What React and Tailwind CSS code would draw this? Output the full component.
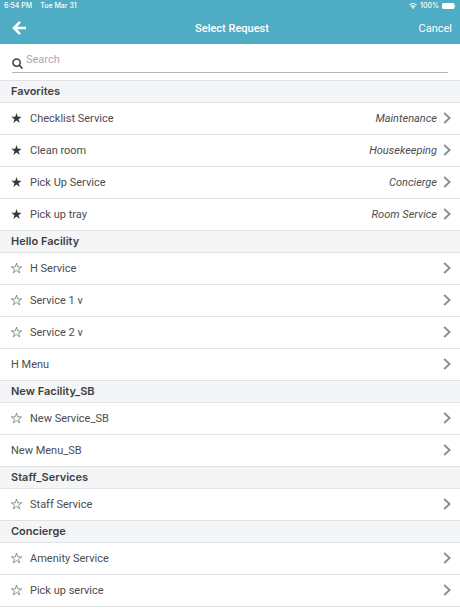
const sections = [
  {
    title: "Favorites",
    items: [
      { name: "Checklist Service", star: "filled", category: "Maintenance" },
      { name: "Clean room", star: "filled", category: "Housekeeping" },
      { name: "Pick Up Service", star: "filled", category: "Concierge" },
      { name: "Pick up tray", star: "filled", category: "Room Service" },
    ],
  },
  {
    title: "Hello Facility",
    items: [
      { name: "H Service", star: "outline" },
      { name: "Service 1 v", star: "outline" },
      { name: "Service 2 v", star: "outline" },
      { name: "H Menu" },
    ],
  },
  {
    title: "New Facility_SB",
    items: [{ name: "New Service_SB", star: "outline" }, { name: "New Menu_SB" }],
  },
  {
    title: "Staff_Services",
    items: [{ name: "Staff Service", star: "outline" }],
  },
  {
    title: "Concierge",
    items: [
      { name: "Amenity Service", star: "outline" },
      { name: "Pick up service", star: "outline" },
    ],
  },
];

function Star({ filled }) {
  return (
    <svg
      viewBox="0 0 20 20"
      className="size-[11px] overflow-visible"
      fill={filled ? "#38383b" : "none"}
      stroke={filled ? "none" : "#69696c"}
      strokeWidth="1.3"
      aria-hidden="true"
    >
      <path d="M10 0.2 L12.3 7 H19.4 L13.7 11.2 L15.9 18 L10 13.8 L4.1 18 L6.3 11.2 L0.6 7 H7.7 Z" />
    </svg>
  );
}

function Row({ item }) {
  return (
    <li className="flex h-8 items-center border-t border-[#e2e4e6] pr-[9px] pb-px pl-[11px]">
      {item.star && (
        <button type="button" aria-label={"Favorite " + item.name} className="mr-2 flex w-[11px] shrink-0">
          <Star filled={item.star === "filled"} />
        </button>
      )}
      <a href="#request" className="flex min-w-0 flex-1 items-center justify-between">
        <span className="pt-0.5">{item.name}</span>
        <span className="flex items-center gap-[6px]">
          {item.category && <span className="pt-0.5 italic">{item.category}</span>}
          <svg viewBox="0 0 8 12" className="h-3 w-2" fill="none" stroke="#8b8b8e" strokeWidth="1.8" aria-hidden="true">
            <path d="M1.2 1 L6.6 6 L1.2 11" />
          </svg>
        </span>
      </a>
    </li>
  );
}

export default function App() {
  return (
    <div className="min-h-screen bg-white font-['Roboto','Liberation_Sans',sans-serif] text-[11px] leading-4 text-[#4c4c4f]">
      <header className="bg-[#4eacc4] text-white">
        <div className="flex h-3 items-center justify-between px-1 font-['Inter','Liberation_Sans',sans-serif] text-[7px] leading-3 font-medium">
          <div className="flex gap-2">
            <span>6:54 PM</span>
            <span>Tue Mar 31</span>
          </div>
          <div className="flex items-center gap-[3px]">
            <svg viewBox="0 0 16 12" className="h-[6px] w-2" fill="none" stroke="white" strokeWidth="2.6" aria-hidden="true">
              <path d="M1 4.2 C5 0.4 11 0.4 15 4.2 M3.8 7.6 C6.3 5.3 9.7 5.3 12.2 7.6" />
              <path d="M8 12 L5.6 9.4 C7 8.2 9 8.2 10.4 9.4 Z" fill="white" stroke="none" />
            </svg>
            <span>100%</span>
            <svg viewBox="0 0 28 12" className="h-[6px] w-[14px]" fill="white" aria-hidden="true">
              <rect x="0" y="0" width="25" height="12" rx="3" />
              <path d="M26 4 C28 4.5 28 7.5 26 8 Z" opacity="0.7" />
            </svg>
          </div>
        </div>
        <div className="grid h-8 grid-cols-3 items-center pr-2 pl-3">
          <button type="button" aria-label="Back" className="justify-self-start">
            <svg viewBox="0 0 14 14" className="size-[14px]" fill="none" stroke="white" strokeWidth="2.6" aria-hidden="true">
              <path d="M8 0.9 L2 7 L8 13.1 M2 7 H14" />
            </svg>
          </button>
          <h1 className="justify-self-center pt-0.5 font-medium">Select Request</h1>
          <button type="button" className="justify-self-end pt-0.5">Cancel</button>
        </div>
      </header>

      <main>
        <div className="h-9 px-3 pt-2">
          <label className="flex h-[21px] gap-[3px] border-b border-[#b5b5b8]">
            <svg viewBox="0 0 20 20" className="mt-[6px] size-[11px] shrink-0" fill="none" stroke="#3d3d40" strokeWidth="2.8" aria-hidden="true">
              <circle cx="8.3" cy="8.3" r="6.6" />
              <path d="M13 13 L19 19" />
            </svg>
            <input
              type="text"
              placeholder="Search"
              aria-label="Search"
              className="h-4 min-w-0 flex-1 bg-transparent outline-none placeholder:text-[#a9a9ab]"
            />
          </label>
        </div>
        {sections.map((section) => (
          <section key={section.title}>
            <h2 className="h-[22px] border-t border-[#dfe1e3] bg-[#f3f5f7] pl-[11px] font-['Inter','Liberation_Sans',sans-serif] leading-5 font-semibold text-[#3f3f42]">
              {section.title}
            </h2>
            <ul>
              {section.items.map((item) => (
                <Row key={item.name} item={item} />
              ))}
            </ul>
          </section>
        ))}
        <div className="border-t border-[#e2e4e6]" />
      </main>
    </div>
  );
}
